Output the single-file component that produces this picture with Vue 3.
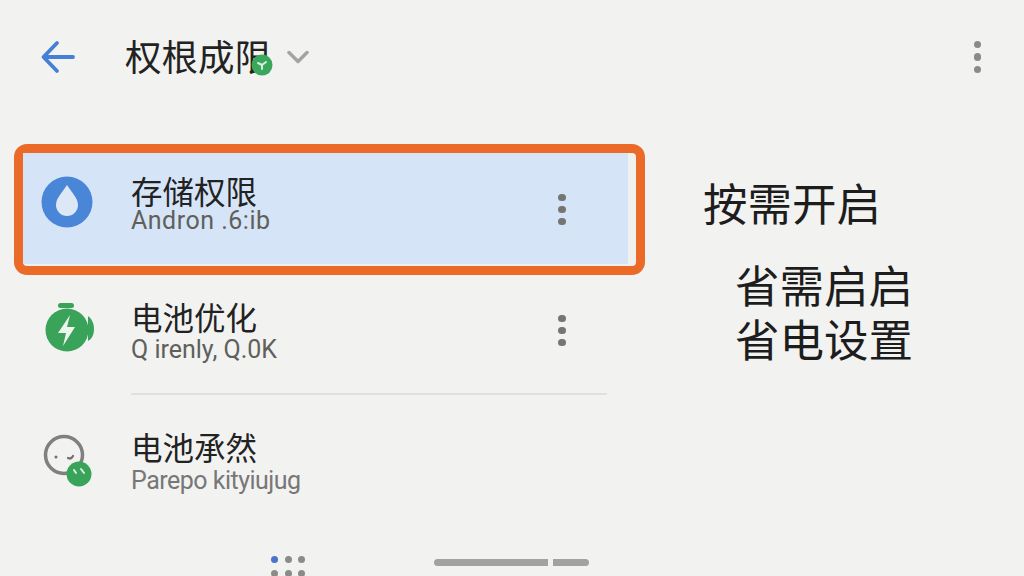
<script setup>
const dots = [0, 1, 2]
</script>

<template>
  <div class="page">
    <header class="top">
      <svg class="back" width="36" height="36" viewBox="0 0 36 36" aria-hidden="true">
        <path d="M33 18H4M17 4 3.500 18 17 32" fill="none" stroke="#4480d6" stroke-width="3.800" stroke-linecap="round" stroke-linejoin="round" />
      </svg>
      <div class="title">
        <span>权根成限</span>
        <svg class="title-badge" width="22" height="22" viewBox="0 0 22 22" aria-hidden="true">
          <circle cx="11" cy="11" r="10.500" fill="#3aa85c" />
          <path d="M11 15v-4M11 11l-4-2M11 11l4-3" stroke="#d5eedd" stroke-width="2" fill="none" stroke-linecap="round" />
        </svg>
      </div>
      <svg class="chevron" width="22" height="14" viewBox="0 0 22 14" aria-hidden="true">
        <path d="M2 2.500 11 11.500 20 2.500" fill="none" stroke="#a3a3a3" stroke-width="3.500" stroke-linecap="round" stroke-linejoin="round" />
      </svg>
      <div class="more top-more">
        <i v-for="d in dots" :key="d"></i>
      </div>
    </header>

    <main class="main">
      <section class="list">
        <div class="selected">
          <div class="row row-first">
            <svg class="icon" width="60" height="60" viewBox="0 0 60 60" aria-hidden="true">
              <circle cx="30" cy="30" r="25.500" fill="#4a86d8" />
              <path d="M30 13C25 21 19 26 19 33a11 11 0 0 0 22 0C41 26 35 21 30 13Z" fill="#dde8f6" />
            </svg>
            <div class="text">
              <div class="name">存储权限</div>
              <div class="sub">Andron .6:ib</div>
            </div>
            <div class="more"><i v-for="d in dots" :key="d"></i></div>
          </div>
        </div>

        <div class="row row-second">
          <svg class="icon" width="60" height="60" viewBox="0 0 60 60" aria-hidden="true">
            <rect x="21" y="2" width="16" height="5" rx="2.500" fill="#3aa35a" />
            <path d="M51 15c4 3 6 8 6 13s-2 10-6 12Z" fill="#3aa35a" />
            <circle cx="30" cy="29" r="21.500" fill="#3aa35a" />
            <path d="M33 14 21 32h8l-3 13 12-19h-8Z" fill="#eef5ef" />
          </svg>
          <div class="text">
            <div class="name">电池优化</div>
            <div class="sub sub-spaced">Q irenly, Q.0K</div>
          </div>
          <div class="more"><i v-for="d in dots" :key="d"></i></div>
        </div>

        <div class="divider"></div>

        <div class="row row-third">
          <svg class="icon" width="60" height="60" viewBox="0 0 60 60" aria-hidden="true">
            <circle cx="27" cy="28" r="18.500" fill="none" stroke="#808080" stroke-width="3.500" />
            <circle cx="19" cy="30" r="1.500" fill="#707070" />
            <path d="M31 31c2 1 4 0 5-2" fill="none" stroke="#707070" stroke-width="2.200" stroke-linecap="round" />
            <circle cx="42" cy="47" r="12.500" fill="#3aa35a" />
            <path d="M37 43l2 3M44 42l3 4" stroke="#dcefe2" stroke-width="2" stroke-linecap="round" />
          </svg>
          <div class="text">
            <div class="name">电池承然</div>
            <div class="sub sub-third">Parepo kityiujug</div>
          </div>
        </div>
      </section>

      <aside class="notes">
        <div class="note-head">按需开启</div>
        <div class="note-body">
          <div>省需启启</div>
          <div>省电设置</div>
        </div>
      </aside>
    </main>

    <footer class="bottom">
      <div class="grid">
        <i class="on"></i><i></i><i></i><i></i><i></i><i></i>
      </div>
      <div class="bars">
        <b class="long"></b>
        <b class="short"></b>
      </div>
    </footer>
  </div>
</template>

<style>
html, body { margin: 0; background: #f2f2f1; }
</style>

<style scoped>
.page {
  width: 1024px;
  height: 576px;
  overflow: hidden;
  display: flex;
  flex-direction: column;
  background: #f2f2f1;
  color: #222;
  font-family: "Roboto", "Noto Sans CJK SC", sans-serif;
}
.top {
  height: 144px;
  flex: none;
  box-sizing: border-box;
  padding: 38px 43px 0 40px;
  display: flex;
  align-items: flex-start;
}
.back { flex: none; margin-top: 1px; }
.title {
  position: relative;
  margin-left: 49px;
  margin-top: -1px;
  font: 36.500px/38px "Noto Sans CJK SC", sans-serif;
  color: #222;
}
.title-badge { position: absolute; left: 126px; top: 17px; }
.chevron { margin-left: 16px; margin-top: 12px; flex: none; }
.more {
  display: flex;
  flex-direction: column;
  gap: 4.500px;
  flex: none;
}
.more i {
  display: block;
  width: 7.500px;
  height: 7.500px;
  border-radius: 50%;
  background: #757672;
}
.top-more { margin-left: auto; margin-top: 2.500px; gap: 5px; }
.top-more i { background: #8a8a88; }
.main { flex: none; height: 393px; display: flex; }
.list { flex: none; width: 631px; margin-left: 14px; }
.selected {
  box-sizing: border-box;
  height: 131px;
  border: 9px solid #ec6a28;
  border-radius: 13px;
  background: #f0f0ec;
}
.row { display: flex; align-items: flex-start; }
.row-first {
  box-sizing: border-box;
  height: 111px;
  margin-right: 8px;
  background: #d5e5f7;
  padding-top: 19px;
  padding-left: 14px;
}
.row-second { height: 118px; padding: 26px 0 0 23px; box-sizing: border-box; }
.row-third { padding: 32px 0 0 23px; }
.icon { flex: none; }
.text { margin-left: 34px; width: 427px; flex: none; }
.row-first .text { margin-top: 1px; }
.row-second .text { margin-top: -2px; }
.row-third .text { margin-top: 2px; }
.row-second .more { margin-top: 13.500px; }
.row-first .more { margin-top: 21.500px; }
.name {
  font: 31.500px/34px "Noto Sans CJK SC", sans-serif;
  color: #222;
}
.sub {
  font: 25px/28px "Roboto", sans-serif;
  color: #5f605b;
  white-space: nowrap;
  letter-spacing: 0.500px;
}
.sub-spaced { margin-top: 3px; letter-spacing: 0; }
.sub-third { color: #777; margin-top: 4px; letter-spacing: -0.500px; }
.divider {
  height: 2px;
  margin-left: 117px;
  width: 476px;
  background: #e0e0de;
}
.notes {
  margin-left: 58px;
  margin-top: 31px;
  color: #1d1d1d;
  font: 44.500px/54px "Noto Sans CJK SC", sans-serif;
}
.note-body { margin-left: 32px; margin-top: 28px; }
.bottom {
  flex: none;
  height: 39px;
  display: flex;
  align-items: flex-start;
  padding: 20px 0 0 271px;
  box-sizing: border-box;
}
.grid {
  display: grid;
  grid-template-columns: repeat(3, 7px);
  gap: 6.500px;
  flex: none;
  margin-top: -1px;
}
.grid i { width: 7px; height: 7px; border-radius: 50%; background: #8b8b88; }
.grid i.on { background: #4a74cc; }
.bars { display: flex; gap: 5px; margin-left: 129px; margin-top: 2px; }
.bars b { display: block; height: 7px; background: #a2a2a0; }
.long { width: 114px; border-radius: 4px 0 0 4px; }
.short { width: 36px; border-radius: 0 4px 4px 0; }
</style>
